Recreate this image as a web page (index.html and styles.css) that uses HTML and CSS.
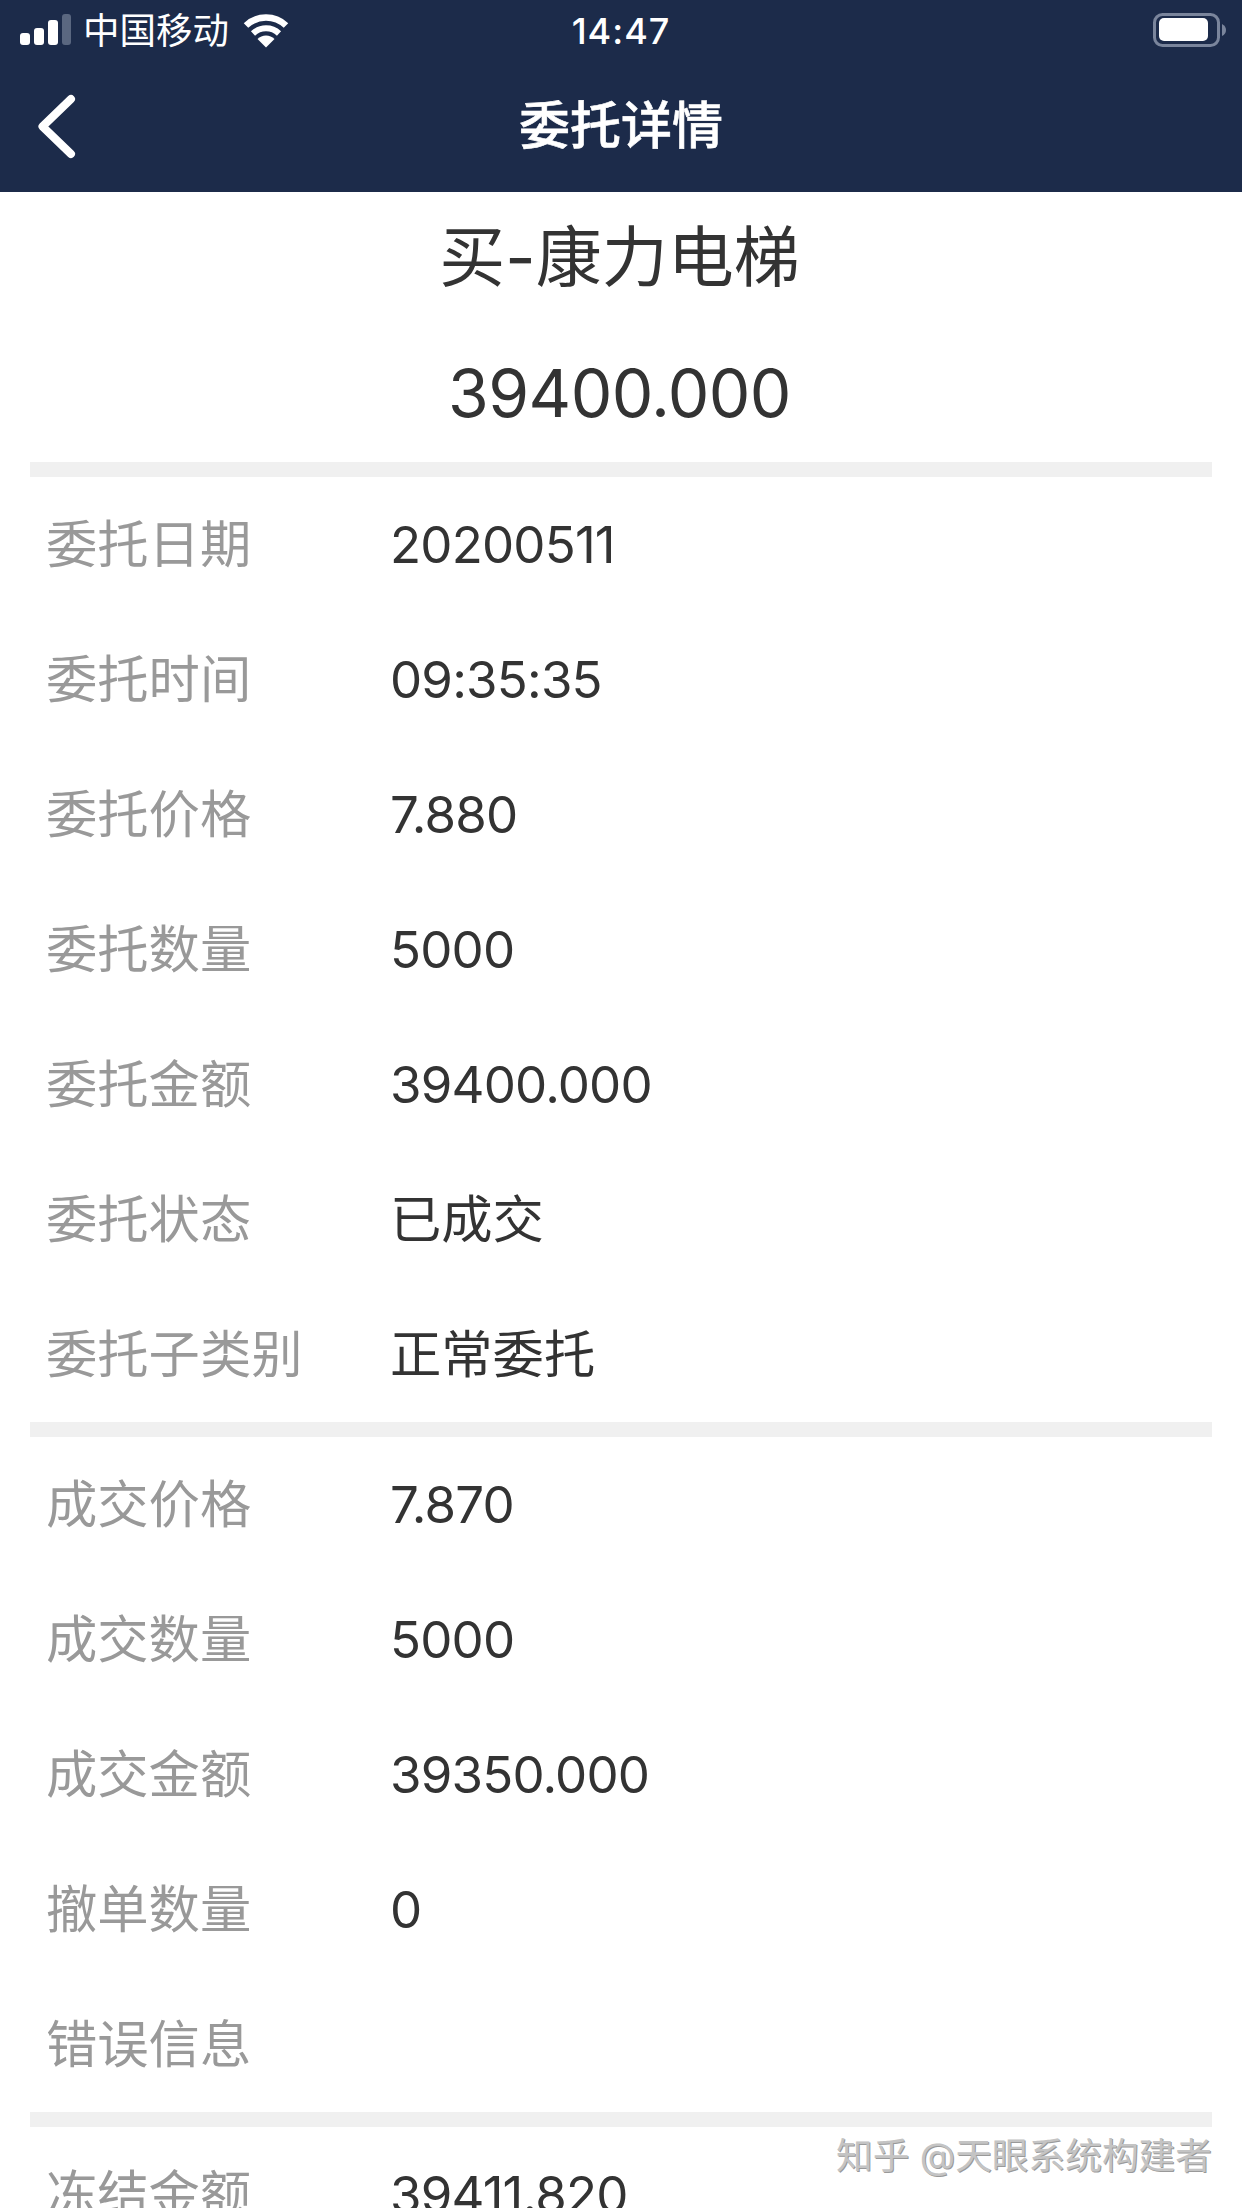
FILE: index.html
```html
<!DOCTYPE html>
<html lang="zh">
<head>
<meta charset="utf-8">
<title>委托详情</title>
<link rel="stylesheet" href="styles.css">
</head>
<body>
<div class="screen">
  <header class="head">
    <div class="status">
      <div class="status-left">
        <svg class="signal" width="54" height="34" viewBox="0 0 54 34"><rect x="0" y="19" width="10" height="12" rx="3" fill="#fff"/><rect x="14" y="14" width="10" height="17" rx="3" fill="#fff"/><rect x="28" y="6" width="10" height="25" rx="3" fill="#fff"/><rect x="42" y="0" width="9" height="31" rx="3" fill="#5a6780"/></svg>
        <span class="carrier">中国移动</span>
        <svg class="wifi" width="46" height="34" viewBox="0 0 46 34"><path d="M23 33.500 14.500 25a12 12 0 0 1 17 0Z" fill="#fff"/><path d="M3 11.500a29 29 0 0 1 40 0" fill="none" stroke="#fff" stroke-width="6.500"/><path d="M10 19.500a19 19 0 0 1 26 0" fill="none" stroke="#fff" stroke-width="6"/></svg>
      </div>
      <span class="clock">14:47</span>
      <svg class="battery" width="74" height="36" viewBox="0 0 74 36"><rect x="1.500" y="1.500" width="64" height="31" rx="8" fill="none" stroke="#7a859c" stroke-width="3"/><rect x="6" y="5" width="49" height="23" rx="5" fill="#fff"/><path d="M69 11q4 2 4 6T69 23Z" fill="#7a859c"/></svg>
    </div>
    <div class="nav">
      <svg class="back" width="44" height="68" viewBox="0 0 44 68"><path d="M36 6 7.500 33.500 36 61" fill="none" stroke="#fff" stroke-width="8" stroke-linecap="round" stroke-linejoin="round"/></svg>
      <h1 class="nav-title">委托详情</h1>
    </div>
  </header>
  <section class="summary">
    <div class="name">买-康力电梯</div>
    <div class="amount">39400.000</div>
  </section>
  <div class="divider"></div>
  <dl class="group">
    <div class="row"><dt>委托日期</dt><dd class="num">20200511</dd></div>
    <div class="row"><dt>委托时间</dt><dd class="num">09:35:35</dd></div>
    <div class="row"><dt>委托价格</dt><dd class="num">7.880</dd></div>
    <div class="row"><dt>委托数量</dt><dd class="num">5000</dd></div>
    <div class="row"><dt>委托金额</dt><dd class="num">39400.000</dd></div>
    <div class="row"><dt>委托状态</dt><dd class="cjk">已成交</dd></div>
    <div class="row"><dt>委托子类别</dt><dd class="cjk">正常委托</dd></div>
  </dl>
  <div class="divider"></div>
  <dl class="group">
    <div class="row"><dt>成交价格</dt><dd class="num">7.870</dd></div>
    <div class="row"><dt>成交数量</dt><dd class="num">5000</dd></div>
    <div class="row"><dt>成交金额</dt><dd class="num">39350.000</dd></div>
    <div class="row"><dt>撤单数量</dt><dd class="num">0</dd></div>
    <div class="row"><dt>错误信息</dt><dd></dd></div>
  </dl>
  <div class="divider"></div>
  <dl class="group">
    <div class="row"><dt>冻结金额</dt><dd class="num">39411.820</dd></div>
  </dl>
  <div class="watermark">知乎 @天眼系统构建者</div>
</div>
</body>
</html>
```
FILE: styles.css
```css
* { box-sizing: border-box; }
html, body { margin: 0; padding: 0; background: #fff; }
body { font-family: Inter, "Noto Sans CJK SC", sans-serif; }
.screen { position: relative; width: 1242px; height: 2208px; overflow: hidden; background: #fff; }
.head { height: 192px; background: #1c2b4a; color: #fff; display: flex; flex-direction: column; }
.status { height: 62px; padding: 0 20px; display: grid; grid-template-columns: 1fr auto 1fr; align-items: center; }
.status-left { display: flex; align-items: center; gap: 11px; }
.signal { flex: none; margin-right: -2px; }
.wifi { margin-left: 3px; }
.carrier { font-size: 36.500px; line-height: 62px; }
.clock { font-size: 36px; font-weight: 500; line-height: 62px; letter-spacing: 1px; }
.battery { justify-self: end; margin-right: -5px; }
.nav { flex: 1; position: relative; display: flex; align-items: center; justify-content: center; }
.back { position: absolute; left: 35px; top: 31px; }
.nav-title { margin: 0; font-size: 51px; font-weight: 500; -webkit-text-stroke: 0.600px #fff; line-height: 1; padding-bottom: 3px; }
.summary { height: 270px; padding-top: 25px; text-align: center; color: #333; }
.name { font-size: 66px; line-height: 80px; padding-right: 3px; }
.amount { font-size: 66px; line-height: 80px; margin-top: 56px; letter-spacing: -0.600px; padding-right: 3px; }
.divider { height: 15px; margin: 0 30px; background: #f0f0f0; }
.group { margin: 0; }
.row { height: 135px; display: flex; align-items: center; padding-left: 46px; font-size: 51px; }
.row dt { width: 344px; color: #999; padding-bottom: 8px; font-size: 51.300px; }
.row dd { margin: 0; color: #333; }
.row .num { letter-spacing: -0.800px; }
.row .cjk { padding-bottom: 8px; font-size: 51.300px; }
.watermark { position: absolute; right: 30px; top: 2134px; font-size: 36.700px; line-height: 44px; color: #c4c4c4; text-shadow: 1px 1px 0 #999; }
```
